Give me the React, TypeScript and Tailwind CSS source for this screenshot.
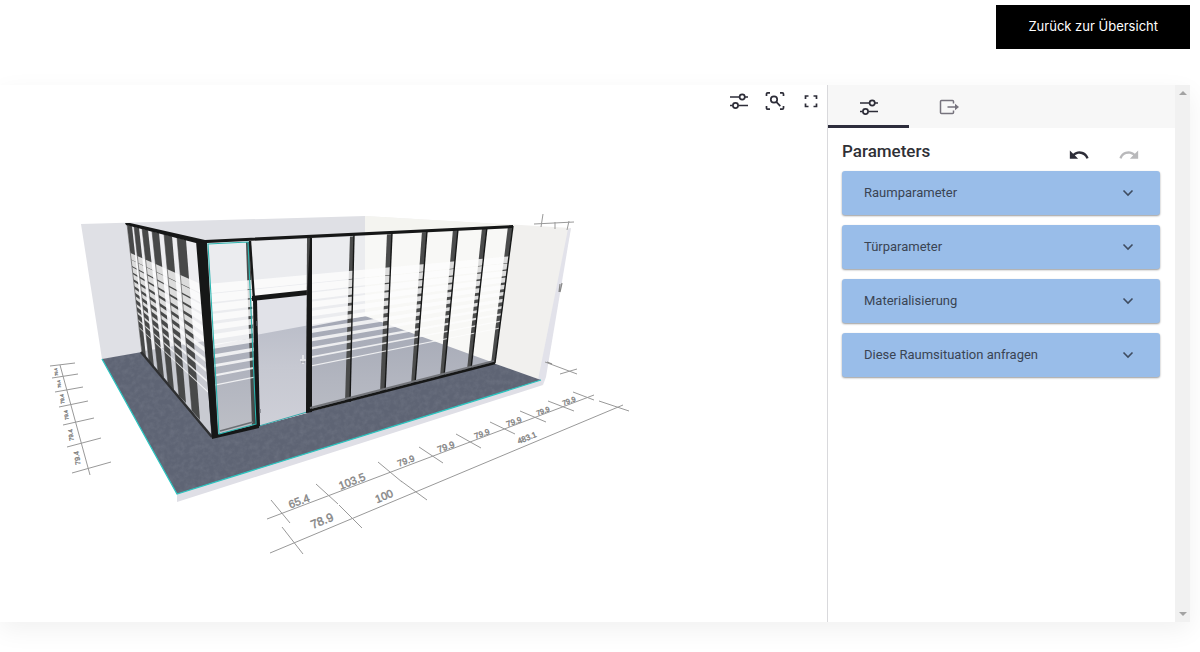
import type { ReactNode } from 'react';
import { MdRedo, MdUndo } from 'react-icons/md';

type Point = [number, number];

const sections = [
  'Raumparameter',
  'Türparameter',
  'Materialisierung',
  'Diese Raumsituation anfragen',
];

// mullions of the front: top left, top right, bottom right, bottom left
const frontPosts: Point[][] = [
  [[350, 235], [354, 235], [350, 402], [345, 403]],
  [[387, 233], [392, 233], [385, 392], [380, 393]],
  [[422, 231], [427, 231], [415, 384], [411, 385]],
  [[453, 229], [458, 229], [444, 376], [440, 377]],
  [[482, 228], [487, 227], [471, 369], [467, 370]],
  [[508, 226], [513, 226], [495, 363], [491, 364]],
];

const sidePosts: Point[][] = [
  [[127, 224], [132, 226], [146, 357], [142, 353]],
  [[134, 226], [139, 228], [154, 367], [149, 361]],
  [[142, 228], [148, 230], [164, 378], [158, 371]],
  [[152, 231], [159, 233], [174, 390], [168, 383]],
  [[164, 234], [172, 236], [186, 403], [179, 396]],
  [[177, 237], [186, 240], [200, 420], [192, 411]],
];

// x1, y1, x2, y2
const dimensionLines = [
  [60, 365, 90, 475], [50, 366, 75, 363], [52, 378, 78, 374], [55, 392, 83, 387],
  [59, 407, 88, 401], [63, 425, 94, 418], [67, 447, 101, 438], [72, 473, 111, 462],
  [267, 519, 594, 395], [271, 500, 290, 523], [316, 484, 338, 504], [378, 462, 402, 482],
  [419, 447, 443, 463], [456, 434, 481, 448], [490, 422, 515, 434], [520, 411, 546, 422],
  [548, 401, 574, 411], [573, 392, 594, 400],
  [270, 553, 623, 405], [282, 527, 303, 554], [339, 505, 362, 528], [401, 481, 427, 500],
  [599, 401, 629, 411],
  [534, 224, 574, 222], [543, 214, 541, 227], [555, 222, 555, 229], [569, 221, 567, 230],
  [545, 362, 577, 374], [560, 374, 577, 369],
];

const dimensionLabels = [
  { x: 299, y: 501, text: '65.4', size: 11, angle: -20 },
  { x: 352, y: 481, text: '103.5', size: 11, angle: -21 },
  { x: 406, y: 461, text: '79.9', size: 9, angle: -20 },
  { x: 446, y: 447, text: '79.9', size: 9, angle: -20 },
  { x: 482, y: 434, text: '79.9', size: 8, angle: -20 },
  { x: 514, y: 422, text: '79.9', size: 8, angle: -20 },
  { x: 543, y: 411, text: '79.9', size: 7, angle: -20 },
  { x: 569, y: 401, text: '79.9', size: 7, angle: -20 },
  { x: 322, y: 521, text: '78.9', size: 12, angle: -22 },
  { x: 384, y: 496, text: '100', size: 11, angle: -22 },
  { x: 527, y: 438, text: '483.1', size: 8, angle: -22 },
  { x: 56, y: 372, text: '79.4', size: 4, angle: -97 },
  { x: 59, y: 384, text: '79.4', size: 4, angle: -97 },
  { x: 62, y: 399, text: '79.4', size: 5, angle: -97 },
  { x: 66, y: 415, text: '79.4', size: 5, angle: -98 },
  { x: 71, y: 435, text: '79.4', size: 6, angle: -98 },
  { x: 77, y: 458, text: '79.4', size: 7, angle: -98 },
];

const toPoints = (points: Point[]) => points.map((p) => p.join(',')).join(' ');

// privacy film: white bands that get thinner towards the floor
const bands = Array.from({ length: 11 }, (_, i) => {
  const cover = 0.93 - i * 0.08;
  const at = (start: number, step: number, end: boolean) =>
    start + step * (i + (end ? cover : 0));
  return {
    front: toPoints([
      [207, at(284, 10.2, false)],
      [513, at(256, 6.9, false)],
      [513, at(256, 6.9, true)],
      [207, at(284, 10.2, true)],
    ]),
    side: toPoints([
      [126, at(251, 6.4, false)],
      [212, at(289, 10.6, false)],
      [212, at(289, 10.6, true)],
      [126, at(251, 6.4, true)],
    ]),
  };
});

function RoomScene() {
  return (
    <svg
      viewBox="0 85 827 537"
      className="block h-auto w-full"
      role="img"
      aria-label="3D Raumansicht"
    >
      <defs>
        <clipPath id="glass">
          <polygon points="207,243 249,241 309,239 513,227 495,363 309,412 309,295 255,300 257,427 218,436" />
        </clipPath>
        <clipPath id="side">
          <polygon points="127,225 198,243 211,436 142,354" />
        </clipPath>
        <clipPath id="door">
          <polygon points="257,300 307,295 307,413 259,426" />
        </clipPath>
        <linearGradient id="doorFloor" x1="0" y1="0" x2="0" y2="1">
          <stop offset="0" stopColor="#bbbec9" />
          <stop offset="0.4" stopColor="#c6c8d1" />
          <stop offset="1" stopColor="#cfd0d8" />
        </linearGradient>
        <linearGradient id="innerFloor" x1="0" y1="0" x2="0" y2="1">
          <stop offset="0" stopColor="#a4a8b5" />
          <stop offset="0.5" stopColor="#b3b6c0" />
          <stop offset="1" stopColor="#c0c2c8" />
        </linearGradient>
        <filter id="carpet" x="0" y="0" width="1" height="1">
          <feTurbulence type="fractalNoise" baseFrequency="0.2" numOctaves="3" />
          <feColorMatrix values="0 0 0 0 0.75  0 0 0 0 0.77  0 0 0 0 0.82  0.9 0 0 0 -0.32" />
          <feComposite in2="SourceGraphic" operator="in" />
        </filter>
      </defs>

      {/* walls */}
      <polygon points="81,224 365,216 365,320 102,359" fill="#dfe0e5" />
      <polygon points="365,216 571,228 541,380 493,363 365,320" fill="#f1f0ee" />
      <polygon points="365,216 513,225 365,234" fill="#f4f4f0" />
      <polygon points="568,229 571,228 546,377 543,385 538,380" fill="#e2e2ea" />

      {/* floor */}
      <polygon points="177,494 541,380 543,385 177,502" fill="#dfdfe6" />
      <polygon points="102,359 142,352 365,316 493,363 541,380 177,494" fill="#5e6474" />
      <polygon
        points="102,359 142,352 365,316 493,363 541,380 177,494"
        fill="#5e6474"
        filter="url(#carpet)"
        opacity="0.18"
      />
      <polyline points="102,359 177,494 541,380" fill="none" stroke="#2cc4bf" strokeWidth="1.3" />

      {/* front glazing */}
      <g clipPath="url(#glass)">
        <polygon points="200,235 365,225 365,320 200,350" fill="#ebecef" />
        <polygon points="365,225 520,225 520,380 365,320" fill="#f8f8f6" />
        <polygon points="200,348 365,316 497,364 309,420 200,450" fill="url(#innerFloor)" />
        {frontPosts.map((post, i) => (
          <polygon key={i} points={toPoints(post)} fill="#4b4c4c" />
        ))}
        <polygon points="246,242 250,242 256,427 252,428" fill="#4b4c4c" />
        {bands.map((band, i) => (
          <polygon key={i} points={band.front} fill="#fcfcfc" opacity="0.82" />
        ))}
      </g>

      {/* side glazing */}
      <g clipPath="url(#side)">
        <polygon points="120,220 200,240 214,440 140,355" fill="#ededf0" />
        <polygon points="138,352 205,341 214,440" fill="#c8cad1" />
        {sidePosts.map((post, i) => (
          <polygon key={i} points={toPoints(post)} fill="#484949" />
        ))}
        {bands.map((band, i) => (
          <polygon key={i} points={band.side} fill="#fcfcfc" opacity="0.82" />
        ))}
      </g>
      {sidePosts.map(([a, , , d], i) => (
        <line key={i} x1={a[0]} y1={a[1]} x2={d[0]} y2={d[1]} stroke="#444" strokeWidth="0.6" />
      ))}
      <line x1="141" y1="352" x2="212" y2="437" stroke="#2e2f31" strokeWidth="2.5" />

      {/* door */}
      <g clipPath="url(#door)">
        <rect x="250" y="290" width="60" height="140" fill="#e1e2e8" />
        <polygon points="250,336 310,325 310,430 250,430" fill="url(#doorFloor)" />
      </g>
      <line x1="259" y1="426" x2="307" y2="412" stroke="#37a9ab" strokeWidth="1" />
      <polygon points="252,296 308,290 308,295 252,301" fill="#161717" />
      <polygon points="253,300 257,300 260,426 255,428" fill="#161717" />
      <polygon points="307,238 310,238 309,412 306,413" fill="#4a4b4b" />
      <polygon points="310,238 312,238 312,412 306,413 307,296" fill="#161717" />
      <path d="M300 360h6M303 355v9" stroke="#e4e5e9" strokeWidth="2" />
      <path d="M301 362h4" stroke="#8d8f98" strokeWidth="1" />
      <path d="M257 321v5M260 409v4" stroke="#6c6e76" strokeWidth="1.2" />

      {/* frame */}
      {frontPosts.map(([, b, c], i) => (
        <line key={i} x1={b[0]} y1={b[1]} x2={c[0]} y2={c[1]} stroke="#161717" strokeWidth="1.4" />
      ))}
      <line x1="250" y1="241" x2="254" y2="300" stroke="#161717" strokeWidth="2.4" />
      <line x1="310" y1="408" x2="494" y2="361" stroke="#73757a" strokeWidth="2" />
      <line x1="308" y1="411" x2="495" y2="363" stroke="#161717" strokeWidth="2.4" />
      <polygon points="125,223 130,223 205,240 513,225 513,228 207,243 196,243 126,225" fill="#161717" />
      <polygon points="196,241 207,243 218,434 259,424 259,428 212,439" fill="#161717" />
      <polygon
        points="208,244 248,242 256,424 219,434"
        fill="none"
        stroke="#2bb5b0"
        strokeWidth="1.1"
      />
      <line x1="220" y1="431" x2="253" y2="422" stroke="#6d6f73" strokeWidth="1.6" />

      {/* dimensions */}
      <g stroke="#999" strokeWidth="1">
        {dimensionLines.map(([x1, y1, x2, y2], i) => (
          <line key={i} x1={x1} y1={y1} x2={x2} y2={y2} />
        ))}
      </g>
      <path d="M562 283l-2 9M560 284l-1 8M547 362l5 2" stroke="#888" strokeWidth="1.2" />
      <g
        fill="#858585"
        stroke="#858585"
        strokeWidth="0.4"
        textAnchor="middle"
        className="font-['Liberation_Sans',sans-serif]"
      >
        {dimensionLabels.map((label, i) => (
          <text
            key={i}
            fontSize={label.size}
            dominantBaseline="central"
            transform={`translate(${label.x} ${label.y}) rotate(${label.angle})`}
          >
            {label.text}
          </text>
        ))}
      </g>
    </svg>
  );
}

function Icon({ children }: { children: ReactNode }) {
  return (
    <svg
      viewBox="0 0 20 20"
      className="size-5"
      fill="none"
      stroke="currentColor"
      strokeWidth="1.7"
      aria-hidden="true"
    >
      {children}
    </svg>
  );
}

function SlidersIcon() {
  return (
    <Icon>
      <path d="M1 6h9.5M16 6h3M1 14.500h2.500M9.500 14.500H19" />
      <circle cx="13.200" cy="6" r="2.600" />
      <circle cx="6.500" cy="14.500" r="2.600" />
    </Icon>
  );
}

function ZoomFitIcon() {
  return (
    <Icon>
      <path d="M1.500 5V3q0-1.200 1.200-1.200H5M15 1.800h2.300q1.200 0 1.200 1.200v2M18.500 15v2q0 1.200-1.200 1.200H15M5 18.200H2.700q-1.200 0-1.200-1.200v-2" />
      <circle cx="9" cy="8.500" r="3.200" />
      <path d="M11.300 10.900l4 4.200" />
    </Icon>
  );
}

function FullscreenIcon() {
  return (
    <Icon>
      <path d="M4.500 8V5H7.500M12.500 5H15.500v3M15.500 12.500v3h-3M7.500 15.500h-3v-3" />
    </Icon>
  );
}

function ExportIcon() {
  return (
    <Icon>
      <path
        strokeWidth="1.500"
        d="M14.500 6.500V4.500a1 1 0 0 0-1-1h-11a1 1 0 0 0-1 1v11a1 1 0 0 0 1 1h11a1 1 0 0 0 1-1v-2M8.500 10H18"
      />
      <path d="M16 6.800l4 3.200-4 3.200z" fill="currentColor" stroke="none" />
    </Icon>
  );
}

function ViewerTools() {
  return (
    <div className="absolute right-1.5 top-1.5 flex gap-4 text-[#2d2d38]">
      <button type="button" aria-label="Parameter">
        <SlidersIcon />
      </button>
      <button type="button" aria-label="Zoom">
        <ZoomFitIcon />
      </button>
      <button type="button" aria-label="Vollbild">
        <FullscreenIcon />
      </button>
    </div>
  );
}

function Section({ title }: { title: string }) {
  return (
    <button
      type="button"
      className="flex h-11 w-full items-center justify-between rounded-[3px] bg-[#99bde9] pl-[22px] pr-6 text-left text-[13px] text-[#3a4453] shadow-[0_1px_2px_rgba(0,0,0,0.4)]"
    >
      {title}
      <svg
        viewBox="0 0 16 16"
        className="size-4"
        fill="none"
        stroke="#3f4c60"
        strokeWidth="1.600"
        aria-hidden="true"
      >
        <path d="M3.500 5.500L8 10l4.500-4.500" />
      </svg>
    </button>
  );
}

function Sidebar() {
  return (
    <aside className="w-[348px] shrink-0 border-l border-[#d9d9dc] bg-white">
      <div className="flex h-[43px] bg-[#f7f7f7]" role="tablist">
        <button
          type="button"
          role="tab"
          aria-selected="true"
          aria-label="Parameters"
          className="flex w-[81px] items-center justify-center text-[#2d2d38] shadow-[inset_0_-3px_0_#2d2d3c]"
        >
          <SlidersIcon />
        </button>
        <button
          type="button"
          role="tab"
          aria-selected="false"
          aria-label="Export"
          className="flex w-20 items-center justify-center text-[#76737d]"
        >
          <ExportIcon />
        </button>
      </div>
      <div className="pl-3.5 pr-[15px]">
        <div className="flex h-[43px] items-start justify-between pr-5 pt-[11px]">
          <h2 className="text-[17px] font-medium leading-6 text-[#2f3036]">Parameters</h2>
          <div className="flex gap-7 pt-[5px]">
            <button type="button" aria-label="Rückgängig" className="text-[#2d2d38]">
              <MdUndo size={22} />
            </button>
            <button type="button" aria-label="Wiederholen" disabled className="text-[#b9b9bb]">
              <MdRedo size={22} />
            </button>
          </div>
        </div>
        <div className="flex flex-col gap-2.5">
          {sections.map((title) => (
            <Section key={title} title={title} />
          ))}
        </div>
      </div>
    </aside>
  );
}

function Scrollbar() {
  return (
    <div
      className="flex w-[15px] shrink-0 flex-col items-center justify-between bg-[#f1f1f1] py-1.5"
      aria-hidden="true"
    >
      <svg viewBox="0 0 8 4" className="h-1 w-2" fill="#a3a3a3">
        <path d="M4 0l4 4H0z" />
      </svg>
      <svg viewBox="0 0 8 4" className="h-1 w-2" fill="#a3a3a3">
        <path d="M0 0h8L4 4z" />
      </svg>
    </div>
  );
}

export default function App() {
  return (
    <div className="min-h-screen overflow-hidden bg-white font-[Roboto,sans-serif]">
      <header className="flex justify-end pb-9 pr-2.5 pt-[5px]">
        <a
          href="#"
          className="flex h-11 items-center bg-black px-8 font-[Inter,sans-serif] text-[13px] text-white"
        >
          Zurück zur Übersicht
        </a>
      </header>
      <main className="mr-2.5 flex bg-white shadow-[0_8px_24px_rgba(0,0,0,0.06)]">
        <div className="relative min-w-0 flex-1">
          <RoomScene />
          <ViewerTools />
        </div>
        <Sidebar />
        <Scrollbar />
      </main>
    </div>
  );
}
